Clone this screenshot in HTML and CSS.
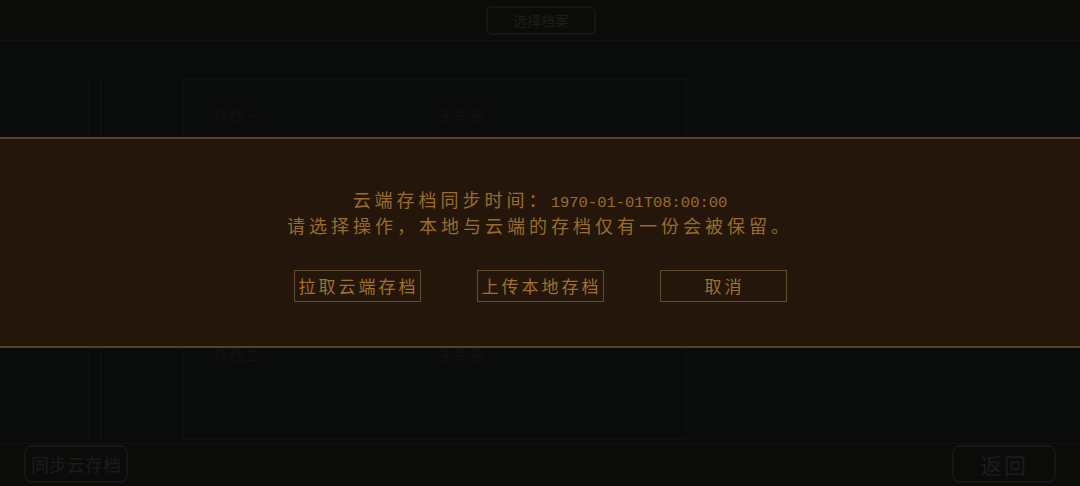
FILE: index.html
```html
<!DOCTYPE html>
<html lang="zh-CN">
<head>
    <meta charset="UTF-8">
    <meta name="viewport" content="width=device-width, initial-scale=1.0">
    <title>选择档案</title>
    <link rel="stylesheet" href="styles.css">
</head>

<body>
    <div class="screen">
        <!-- Top bar -->
        <header class="top-bar">
            <span class="title-tag">选择档案</span>
        </header>

        <!-- Save slots (dimmed behind the dialog) -->
        <main class="save-list">
            <div class="save-slot">
                <div class="slot-index"></div>
                <div class="slot-card">
                    <span class="slot-label">存档一</span>
                    <span class="slot-label">未命名</span>
                </div>
            </div>
            <div class="save-slot">
                <div class="slot-index"></div>
                <div class="slot-card">
                    <span class="slot-label">存档二</span>
                    <span class="slot-label">未命名</span>
                </div>
            </div>
        </main>

        <!-- Bottom bar -->
        <footer class="bottom-bar">
            <button class="bar-btn">同步云存档</button>
            <button class="bar-btn back-btn">返回</button>
        </footer>

        <!-- Cloud sync dialog -->
        <div class="cloud-dialog">
            <div class="dialog-text">
                <span class="text-line">云端存档同步时间：<span class="timestamp">1970-01-01T08:00:00</span></span>
                <span class="text-line">请选择操作，本地与云端的存档仅有一份会被保留。</span>
            </div>
            <div class="dialog-actions">
                <button class="dialog-btn">拉取云端存档</button>
                <button class="dialog-btn">上传本地存档</button>
                <button class="dialog-btn">取消</button>
            </div>
        </div>
    </div>
</body>
</html>
```

FILE: styles.css
```css
body {
    margin: 0;
    padding: 0;
    background: #0a0b0a;
    font-family: "Noto Sans CJK SC", "Noto Sans", sans-serif;
    overflow: hidden;
}

.screen {
    position: relative;
    width: 1080px;
    height: 486px;
    display: flex;
    flex-direction: column;
}

/* Top bar */
.top-bar {
    height: 41px;
    border-bottom: 1px solid #121311;
    background: #0b0b0a;
    display: flex;
    justify-content: center;
    align-items: center;
    box-sizing: border-box;
}

.title-tag {
    width: 106px;
    height: 25px;
    border: 2px solid #161614;
    border-radius: 6px;
    color: #1d1d1b;
    font-size: 14px;
    line-height: 25px;
    text-align: center;
    margin-left: 2px;
}

/* Save list */
.save-list {
    flex: 1;
    display: flex;
    flex-direction: column;
    gap: 118px;
    padding: 37px 0 0 88px;
    background: #0a0c0b;
}

.save-slot {
    display: flex;
    gap: 80px;
    height: 122px;
}

.slot-index {
    width: 10px;
    border-left: 2px solid #0e100e;
    border-right: 2px solid #0e100e;
}

.slot-card {
    width: 505px;
    border: 2px solid #0e100e;
    display: flex;
    gap: 180px;
    padding: 24px 0 0 30px;
    box-sizing: border-box;
}

.slot-label {
    color: #111210;
    font-size: 15px;
}

/* Bottom bar */
.bottom-bar {
    height: 43px;
    border-top: 1px solid #121311;
    background: #0b0b0a;
    display: flex;
    justify-content: space-between;
    align-items: flex-start;
    padding: 1px 24px 0 24px;
    box-sizing: border-box;
}

.bar-btn {
    width: 104px;
    height: 38px;
    border: 2px solid #161614;
    border-radius: 7px;
    background: transparent;
    color: #1c1c1a;
    font-family: "Noto Sans CJK SC", sans-serif;
    font-size: 18px;
    padding: 0;
}

.back-btn {
    font-size: 22px;
    letter-spacing: 2px;
}

/* Cloud sync dialog */
.cloud-dialog {
    position: absolute;
    left: 0;
    top: 137px;
    width: 100%;
    height: 211px;
    background: #24160a;
    border-top: 2px solid #5e4226;
    border-bottom: 2px solid #5a3f24;
    box-sizing: border-box;
    display: flex;
    flex-direction: column;
    align-items: center;
    padding-top: 47px;
}

.dialog-text {
    color: #9a6c2b;
    font-size: 18px;
    letter-spacing: 4px;
    text-align: center;
}

.text-line {
    display: block;
    height: 26px;
    line-height: 26px;
}

.timestamp {
    font-family: "Liberation Mono", monospace;
    font-size: 15.5px;
    letter-spacing: 0;
    line-height: 26px;
}

.dialog-actions {
    display: flex;
    gap: 56px;
    margin-top: 32px;
}

.dialog-btn {
    width: 127px;
    height: 32px;
    border: 1px solid #654c30;
    background: transparent;
    color: #a0712d;
    font-family: "Noto Sans CJK SC", sans-serif;
    font-size: 17px;
    line-height: 30px;
    letter-spacing: 3px;
    padding: 0 0 0 3px;
}
```
